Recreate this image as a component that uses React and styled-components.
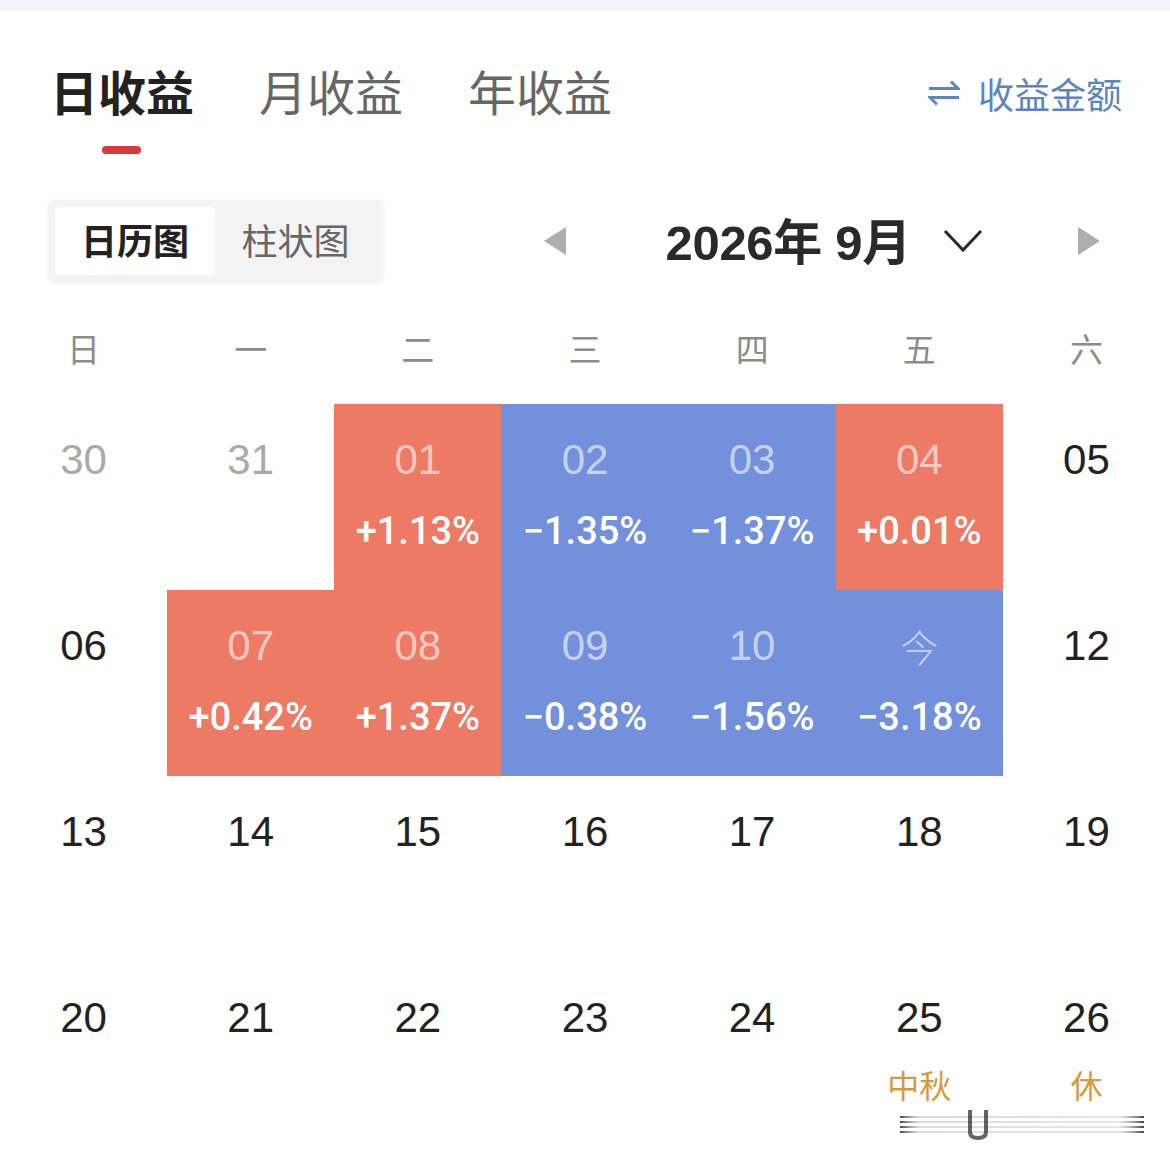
import React from "react";
import styled, { createGlobalStyle } from "styled-components";

const GlobalStyle = createGlobalStyle`
  html, body {
    margin: 0;
    padding: 0;
    background: #fff;
  }
  body {
    font-family: "Liberation Sans", "Noto Sans CJK SC", sans-serif;
  }
`;

const CJK = `"Noto Sans CJK SC", "Liberation Sans", sans-serif`;

const Page = styled.div`
  width: 1170px;
  height: 1166px;
  overflow: hidden;
  background: #fff;
  position: relative;
`;

const TopStrip = styled.div`
  height: 11px;
  background: #f2f2f7;
`;

const Header = styled.div`
  display: flex;
  justify-content: space-between;
  align-items: flex-start;
  padding: 49px 48px 0 50px;
`;

const Tabs = styled.div`
  display: flex;
  gap: 65px;
`;

const Tab = styled.div`
  display: flex;
  flex-direction: column;
  align-items: center;
  font-family: ${CJK};
  font-size: 48px;
  line-height: 60px;
  font-weight: ${(p) => (p.$active ? 700 : 400)};
  color: ${(p) => (p.$active ? "#222" : "#666")};
`;

const Underline = styled.div`
  width: 39px;
  height: 8px;
  margin-top: 26px;
  margin-left: -2px;
  border-radius: 4px;
  background: ${(p) => (p.$show ? "#d9393f" : "transparent")};
`;

const SwitchLink = styled.div`
  display: flex;
  align-items: center;
  gap: 18px;
  margin-top: 11px;
  font-family: ${CJK};
  font-size: 36px;
  line-height: 44px;
  color: #5a84c2;
`;

const ToolRow = styled.div`
  display: flex;
  justify-content: space-between;
  align-items: center;
  margin-top: 46px;
  padding: 0 70px 0 48px;
  height: 82px;
`;

const Toggle = styled.div`
  display: flex;
  padding: 7px;
  background: #f3f3f3;
  border-radius: 6px;
  box-shadow: 0 1px 4px rgba(0, 0, 0, 0.06);
`;

const Segment = styled.div`
  width: ${(p) => (p.$active ? 160 : 161)}px;
  height: 68px;
  box-sizing: border-box;
  padding-bottom: 5px;
  display: flex;
  align-items: center;
  justify-content: center;
  border-radius: 4px;
  font-family: ${CJK};
  font-size: 36px;
  font-weight: ${(p) => (p.$active ? 700 : 400)};
  color: ${(p) => (p.$active ? "#222" : "#666")};
  background: ${(p) => (p.$active ? "#fff" : "transparent")};
`;

const MonthNav = styled.div`
  display: flex;
  align-items: center;
`;

const Title = styled.div`
  margin-left: 100px;
  margin-bottom: 6px;
  font-family: "Liberation Sans", "Noto Sans CJK SC", sans-serif;
  font-size: 49px;
  font-weight: 700;
  color: #2a2a2a;
  letter-spacing: -0.3px;
`;

const Chevron = styled.svg`
  margin-left: 32px;
  margin-right: 95px;
`;

const WeekRow = styled.div`
  display: grid;
  grid-template-columns: repeat(7, 1fr);
  height: 122px;
  box-sizing: border-box;
  padding-top: 10px;
  align-items: center;
`;

const WeekDay = styled.div`
  text-align: center;
  font-family: ${CJK};
  font-size: 33px;
  font-weight: 400;
  color: #8c8c8c;
`;

const Grid = styled.div`
  display: grid;
  grid-template-columns: repeat(7, 1fr);
  grid-auto-rows: 186px;
`;

const Cell = styled.div`
  display: flex;
  flex-direction: column;
  align-items: center;
  background: ${(p) =>
    p.$tone === "up" ? "#ed7a65" : p.$tone === "down" ? "#7290dc" : "transparent"};
`;

const DayNum = styled.div`
  margin-top: 31px;
  height: 50px;
  font-size: ${(p) => (p.$cjk ? 38 : 42)}px;
  line-height: 50px;
  font-family: ${(p) => (p.$cjk ? CJK : `"Liberation Sans", sans-serif`)};
  font-weight: ${(p) => (p.$tone ? 300 : 400)};
  color: ${(p) =>
    p.$tone ? "rgba(255,255,255,0.62)" : p.$muted ? "#aaa" : "#222"};
`;

const Pct = styled.div`
  margin-top: 24px;
  font-family: Roboto, "Liberation Sans", sans-serif;
  font-size: 38px;
  line-height: 44px;
  font-weight: 500;
  color: #fff;
`;

const Holiday = styled.div`
  margin-top: 19px;
  font-family: ${CJK};
  font-size: 32px;
  line-height: 44px;
  color: #d69a3e;
`;

const Smudge = styled.svg`
  position: absolute;
  left: 896px;
  top: 1108px;
`;

const Triangle = ({ dir }) => (
  <svg width="22" height="28" viewBox="0 0 22 28">
    <path
      d={dir === "left" ? "M22 0 V28 L0 14 Z" : "M0 0 V28 L22 14 Z"}
      fill="#aeaeae"
    />
  </svg>
);

const SwapIcon = () => (
  <svg width="32" height="30" viewBox="0 0 32 30" fill="none" stroke="#5a84c2" strokeWidth="3">
    <path d="M1 10.5 H30 L23 3.5" />
    <path d="M31 19.5 H2 L9 26.5" />
  </svg>
);

const days = [
  [
    { d: "30", muted: true },
    { d: "31", muted: true },
    { d: "01", tone: "up", p: "+1.13%" },
    { d: "02", tone: "down", p: "−1.35%" },
    { d: "03", tone: "down", p: "−1.37%" },
    { d: "04", tone: "up", p: "+0.01%" },
    { d: "05" },
  ],
  [
    { d: "06" },
    { d: "07", tone: "up", p: "+0.42%" },
    { d: "08", tone: "up", p: "+1.37%" },
    { d: "09", tone: "down", p: "−0.38%" },
    { d: "10", tone: "down", p: "−1.56%" },
    { d: "今", tone: "down", p: "−3.18%", cjk: true },
    { d: "12" },
  ],
  [{ d: "13" }, { d: "14" }, { d: "15" }, { d: "16" }, { d: "17" }, { d: "18" }, { d: "19" }],
  [
    { d: "20" },
    { d: "21" },
    { d: "22" },
    { d: "23" },
    { d: "24" },
    { d: "25", h: "中秋" },
    { d: "26", h: "休" },
  ],
];

const weekdays = ["日", "一", "二", "三", "四", "五", "六"];

export default function App() {
  return (
    <Page>
      <GlobalStyle />
      <TopStrip />
      <Header>
        <Tabs>
          <Tab $active>
            日收益
            <Underline $show />
          </Tab>
          <Tab>
            月收益
            <Underline />
          </Tab>
          <Tab>
            年收益
            <Underline />
          </Tab>
        </Tabs>
        <SwitchLink>
          <SwapIcon />
          收益金额
        </SwitchLink>
      </Header>

      <ToolRow>
        <Toggle>
          <Segment $active>日历图</Segment>
          <Segment>柱状图</Segment>
        </Toggle>
        <MonthNav>
          <Triangle dir="left" />
          <Title>2026年 9月</Title>
          <Chevron width="40" height="24" viewBox="0 0 40 24" fill="none" stroke="#2a2a2a" strokeWidth="3">
            <path d="M2 2 L20 21 L38 2" />
          </Chevron>
          <Triangle dir="right" />
        </MonthNav>
      </ToolRow>

      <WeekRow>
        {weekdays.map((w) => (
          <WeekDay key={w}>{w}</WeekDay>
        ))}
      </WeekRow>

      <Grid>
        {days.flat().map((c, i) => (
          <Cell key={i} $tone={c.tone}>
            <DayNum $tone={c.tone} $muted={c.muted} $cjk={c.cjk}>
              {c.d}
            </DayNum>
            {c.p && <Pct>{c.p}</Pct>}
            {c.h && <Holiday>{c.h}</Holiday>}
          </Cell>
        ))}
      </Grid>

      <Smudge width="252" height="36" viewBox="0 0 252 36">
        <defs>
          <linearGradient id="ln" x1="0" x2="1" y1="0" y2="0">
            <stop offset="0" stopColor="#333" stopOpacity="0.9" />
            <stop offset="0.08" stopColor="#999" stopOpacity="0.35" />
            <stop offset="0.9" stopColor="#aaa" stopOpacity="0.3" />
            <stop offset="1" stopColor="#333" stopOpacity="0.9" />
          </linearGradient>
        </defs>
        {[8, 13, 18, 23].map((y) => (
          <rect key={y} x="4" y={y} width="244" height="2" fill="url(#ln)" />
        ))}
        <path d="M74 2 V24 Q74 30 82 30 Q90 30 90 24 V2" fill="none" stroke="#222" strokeWidth="4" strokeOpacity="0.7" />
      </Smudge>
    </Page>
  );
}
